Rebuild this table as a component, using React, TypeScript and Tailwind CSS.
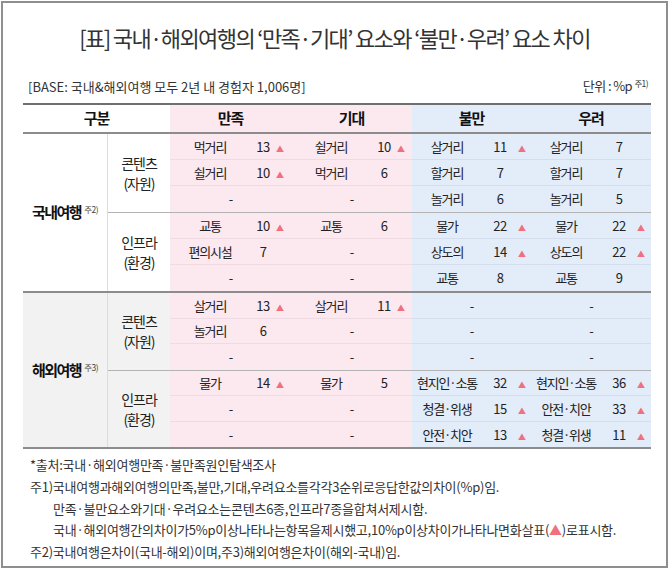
import React from 'react';

type Cell = [string, string, boolean] | null;
type Row = [Cell, Cell, Cell, Cell];

const domestic: { name: string[]; rows: Row[] }[] = [
  {
    name: ['콘텐츠', '(자원)'],
    rows: [
      [['먹거리', '13', true], ['쉴거리', '10', true], ['살거리', '11', true], ['살거리', '7', false]],
      [['쉴거리', '10', true], ['먹거리', '6', false], ['할거리', '7', false], ['할거리', '7', false]],
      [null, null, ['놀거리', '6', false], ['놀거리', '5', false]],
    ],
  },
  {
    name: ['인프라', '(환경)'],
    rows: [
      [['교통', '10', true], ['교통', '6', false], ['물가', '22', true], ['물가', '22', true]],
      [['편의시설', '7', false], null, ['상도의', '14', true], ['상도의', '22', true]],
      [null, null, ['교통', '8', false], ['교통', '9', false]],
    ],
  },
];

const overseas: { name: string[]; rows: Row[] }[] = [
  {
    name: ['콘텐츠', '(자원)'],
    rows: [
      [['살거리', '13', true], ['살거리', '11', true], null, null],
      [['놀거리', '6', false], null, null, null],
      [null, null, null, null],
    ],
  },
  {
    name: ['인프라', '(환경)'],
    rows: [
      [['물가', '14', true], ['물가', '5', false], ['현지인·소통', '32', true], ['현지인·소통', '36', true]],
      [null, null, ['청결·위생', '15', true], ['안전·치안', '33', true]],
      [null, null, ['안전·치안', '13', true], ['청결·위생', '11', true]],
    ],
  },
];

function Tri() {
  return <span className="text-[8px] leading-none text-[#f0707e]">▲</span>;
}

function Block({ cell, idx, line }: { cell: Cell; idx: number; line: boolean }) {
  const pink = idx < 2;
  const bg = pink ? 'bg-[#fce8ef]' : 'bg-[#e3ecf9]';
  const w = idx < 2 ? 'w-[121px]' : idx === 2 ? 'w-[119px]' : 'w-[120px]';
  const border = line ? (pink ? 'border-b border-[#f1dbe3]' : 'border-b border-[#d5deec]') : '';
  if (!cell) {
    return <div className={`${w} ${bg} ${border} flex items-center justify-center`}>-</div>;
  }
  const cols = pink ? 'grid-cols-[80px_26px_1fr]' : 'grid-cols-[70px_36px_1fr]';
  return (
    <div className={`${w} ${bg} ${border} grid ${cols} items-center`}>
      <span className="text-center whitespace-nowrap">{cell[0]}</span>
      <span className="text-center tracking-[-0.5px]">{cell[1]}</span>
      <span>{cell[2] && <Tri />}</span>
    </div>
  );
}

function Group({ title, note, data, gray, rowH }: { title: string; note: string; data: { name: string[]; rows: Row[] }[]; gray: boolean; rowH: string }) {
  const side = gray ? 'bg-[#f2f2f2]' : 'bg-white';
  return (
    <div className="flex border-b-2 border-[#8c8c8c]">
      <div className={`w-[85px] ${side} border-r border-[#dcdcdc] flex items-center justify-center`}>
        <span className="text-[15px] font-bold tracking-[-1.5px] text-[#111]">{title}</span>
        <span className="text-[8.5px] text-[#444] ml-[3px] -mt-[6px] tracking-[-0.5px]">{note}</span>
      </div>
      <div className="flex-1 flex flex-col">
        {data.map((sg, i) => (
          <div key={i} className={`flex ${i === 0 ? 'border-b border-[#b3b3b3]' : ''}`}>
            <div className={`w-[62px] ${side} flex flex-col items-center justify-center text-[14px] leading-[20px] tracking-[-1px]`}>
              <span>{sg.name[0]}</span>
              <span>{sg.name[1]}</span>
            </div>
            <div className="flex flex-col">
              {sg.rows.map((r, j) => (
                <div key={j} className={`flex ${rowH}`}>
                  {r.map((c, k) => (
                    <Block key={k} cell={c} idx={k} line={j < 2} />
                  ))}
                </div>
              ))}
            </div>
          </div>
        ))}
      </div>
    </div>
  );
}

export default function App() {
  return (
    <div
      className="w-[672px] h-[572px] bg-white text-[#222] pt-[1px] pl-[1px]"
      style={{ fontFamily: '"Noto Sans CJK KR", "Noto Sans", sans-serif' }}
    >
      <div className="w-[667px] h-[567px] border-2 border-[#8f8f8f] flex flex-col">
        <h1 className="mt-[19px] text-center text-[22px] leading-[30px] tracking-[-1.6px] text-[#333]">
          [표] 국내·해외여행의 ‘만족·기대’ 요소와 ‘불만·우려’ 요소 차이
        </h1>

        <div className="mt-[25px] ml-[25px] w-[620px] flex justify-between items-center text-[13px] leading-[18px] tracking-[0px] text-[#333]">
          <span>[BASE: 국내&amp;해외여행 모두 2년 내 경험자 1,006명]</span>
          <span className="tracking-[-0.6px]">
            단위 : %p <span className="text-[8.5px] relative -top-[4px]">주1)</span>
          </span>
        </div>

        <div className="mt-[7px] ml-[20px] w-[628px] text-[13px] tracking-[-1.2px] border-t-2 border-[#6f6f6f]">
          <div className="flex h-[29px] border-b-2 border-[#8c8c8c] text-[15px] font-bold tracking-[-1px] text-[#111]">
            <div className="w-[147px] bg-white flex items-center justify-center">구분</div>
            <div className="w-[121px] bg-[#fce8ef] flex items-center justify-center">만족</div>
            <div className="w-[121px] bg-[#fce8ef] flex items-center justify-center">기대</div>
            <div className="w-[119px] bg-[#e3ecf9] flex items-center justify-center">불만</div>
            <div className="w-[120px] bg-[#e3ecf9] flex items-center justify-center">우려</div>
          </div>
          <Group title="국내여행" note="주2)" data={domestic} gray={false} rowH="h-[26px]" />
          <Group title="해외여행" note="주3)" data={overseas} gray={true} rowH="h-[25.5px]" />
        </div>

        <div className="mt-[5px] ml-[27px] text-[13px] leading-[21.8px] tracking-[-0.25px] text-[#333]">
          <p>*출처:국내·해외여행만족·불만족원인탐색조사</p>
          <p>주1)국내여행과해외여행의만족,불만,기대,우려요소를각각3순위로응답한값의차이(%p)임.</p>
          <p className="pl-[23px]">만족·불만요소와기대·우려요소는콘텐츠6종,인프라7종을합쳐서제시함.</p>
          <p className="pl-[23px]">
            국내·해외여행간의차이가5%p이상나타나는항목을제시했고,10%p이상차이가나타나면화살표(
            <span className="text-[#f0707e]">▲</span>)로표시함.
          </p>
          <p>주2)국내여행은차이(국내-해외)이며,주3)해외여행은차이(해외-국내)임.</p>
        </div>
      </div>
    </div>
  );
}
